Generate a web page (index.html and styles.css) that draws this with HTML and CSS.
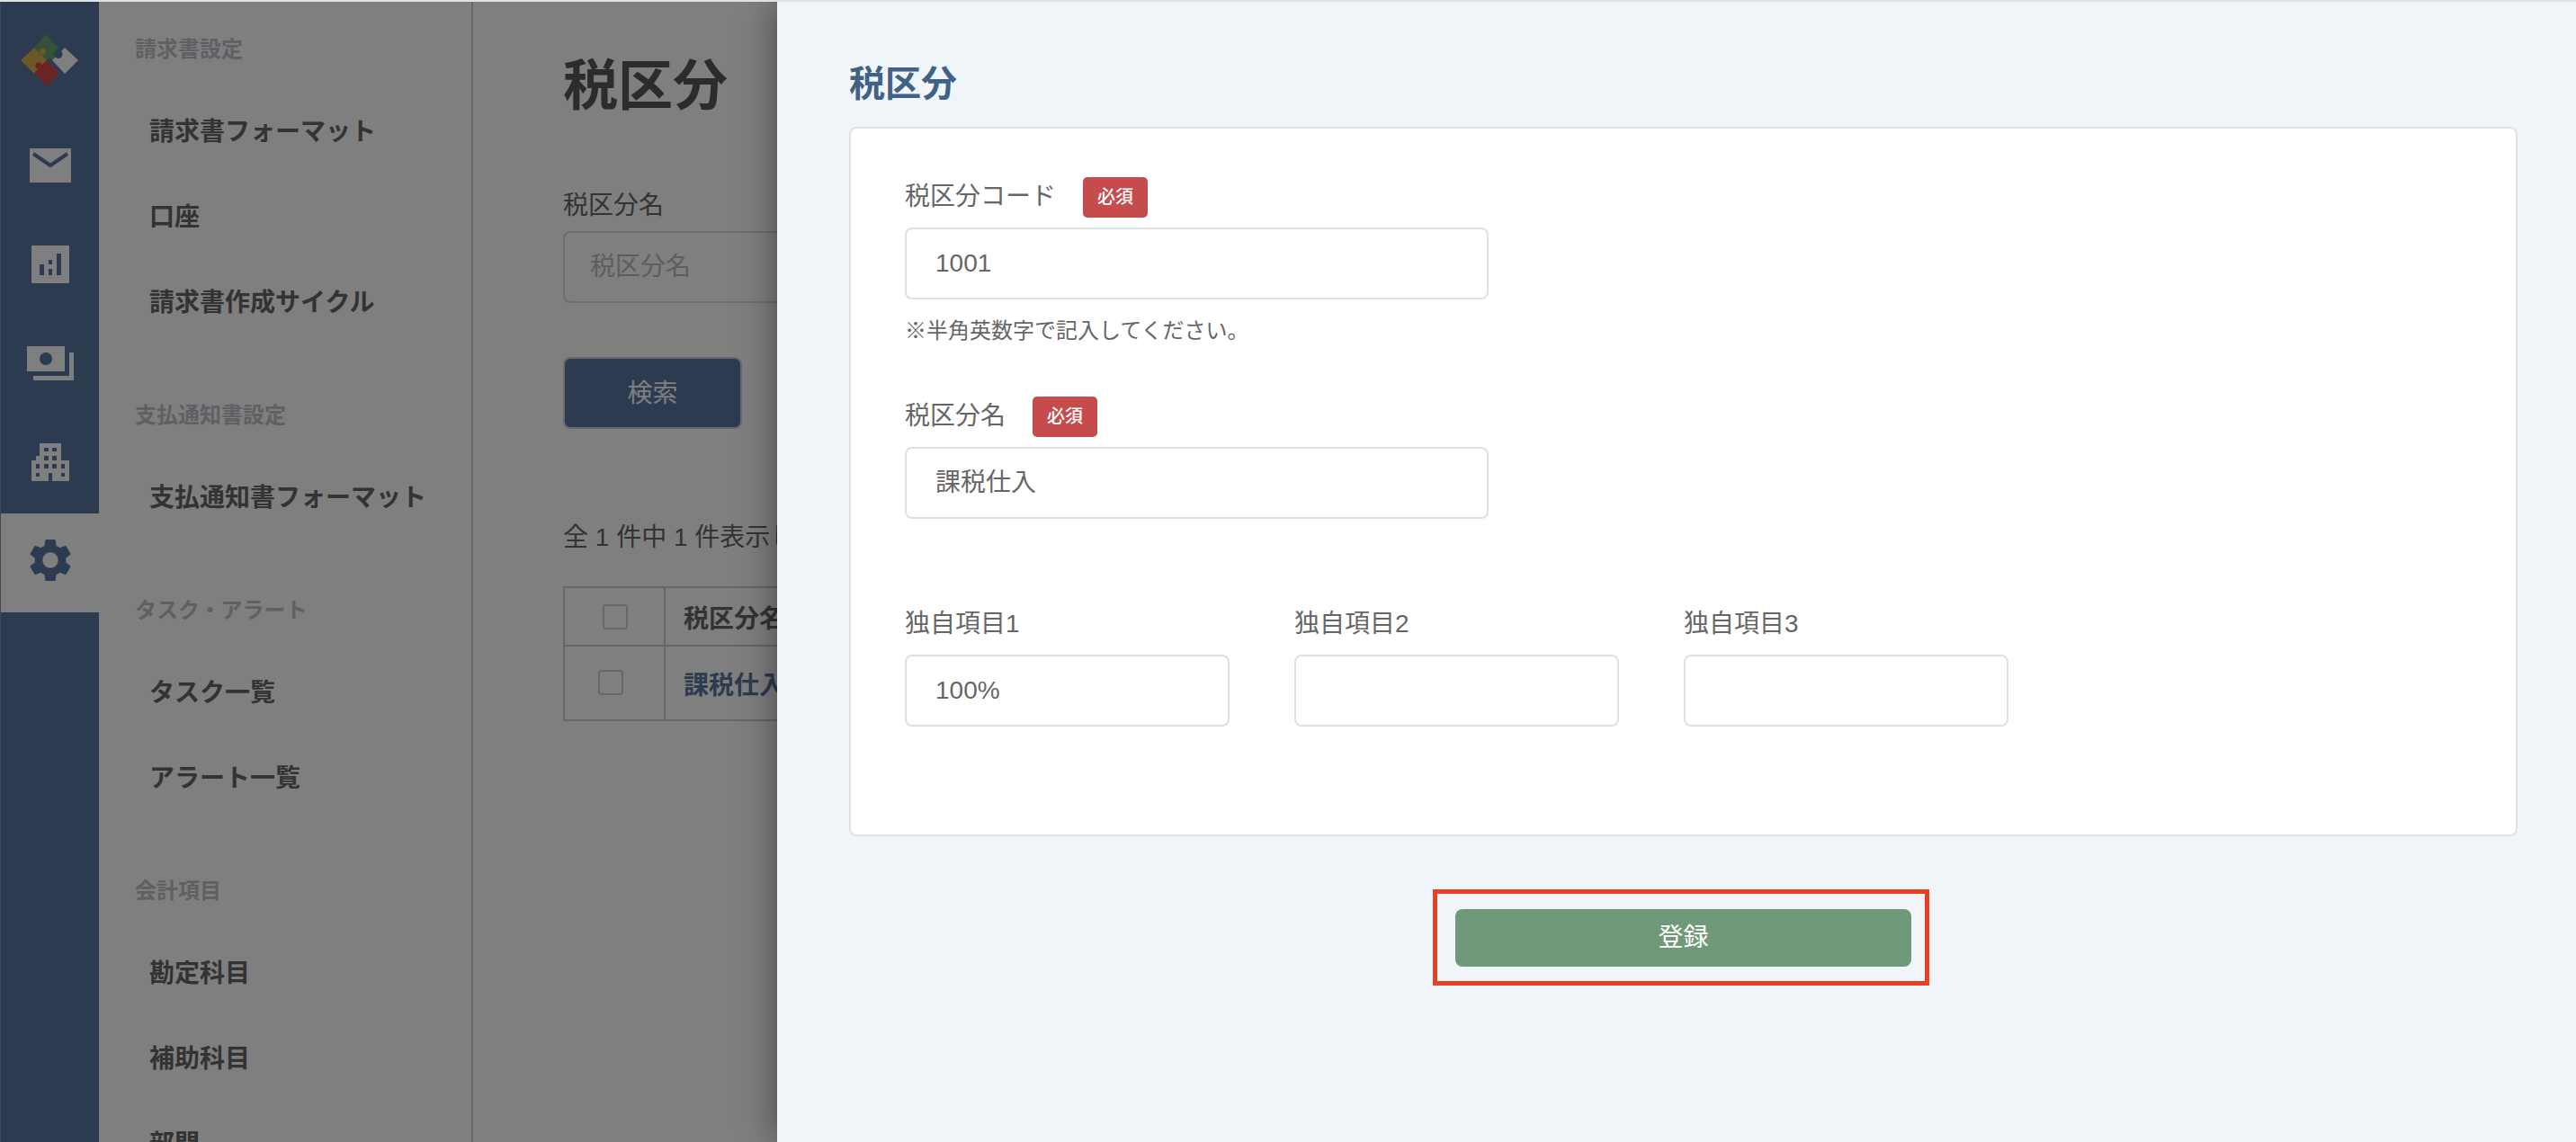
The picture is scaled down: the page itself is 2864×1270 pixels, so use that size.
FILE: index.html
```html
<!DOCTYPE html>
<html lang="ja">
<head>
<meta charset="utf-8">
<title>税区分</title>
<link rel="stylesheet" href="styles.css">
</head>
<body>
<div class="app">
  <nav class="rail">
    <div class="rail-logo">
      <svg class="logo" viewBox="0 0 64 58" aria-hidden="true">
        <path fill="#66a472" d="M27.5 0 42 15 29 29 15 15Z"/>
        <circle fill="#66a472" cx="35" cy="24.5" r="3.5"/>
        <path fill="#d8b04f" d="M15 15 29 29 15 44 0 29Z"/>
        <circle fill="#d8b04f" cx="24.5" cy="19.5" r="3.5"/>
        <path fill="#d64646" d="M29 29 43 43 29 58 15 43Z"/>
        <circle fill="#d64646" cx="20" cy="35" r="3.8"/>
        <path fill="#fff" d="M49 15 64 29 49 44 35 29Z"/>
        <circle fill="#58769e" cx="42" cy="22.5" r="4.5"/>
      </svg>
    </div>
    <a class="rail-item">
      <svg class="icon-mail" viewBox="0 0 46 38" aria-hidden="true"><path fill="#fff" d="M0 0H46V38H0Z"/><path fill="none" stroke="#58769e" stroke-width="4" d="M4 6 23 19 42 6"/></svg>
    </a>
    <a class="rail-item">
      <svg class="icon-chart" viewBox="0 0 42 42" aria-hidden="true"><path fill="#fff" fill-rule="evenodd" d="M0 0H42V42H0ZM9 21V33H14V21ZM19 16V21H23V16ZM19 26V33H23V26ZM28 9V33H33V9Z"/></svg>
    </a>
    <a class="rail-item">
      <svg class="icon-money" viewBox="0 0 52 38" aria-hidden="true"><path fill="#fff" fill-rule="evenodd" d="M0 0H42V28H0ZM21 7A7 7 0 1 0 21 21 7 7 0 1 0 21 7Z"/><path fill="#fff" d="M47 7H52V38H7V33H47Z"/></svg>
    </a>
    <a class="rail-item">
      <svg class="icon-building" viewBox="0 0 42 42" aria-hidden="true"><path fill="#fff" fill-rule="evenodd" d="M9 0H33V19H42V42H23V33H19V42H0V19H9ZM14 5V9H19V5ZM23 5V9H28V5ZM5 14V19H9V14ZM14 14V19H19V14ZM23 14V19H28V14ZM5 23V28H9V23ZM14 23V28H19V23ZM23 23V28H28V23ZM33 23V28H37V23ZM5 33V37H9V33ZM33 33V37H37V33Z"/></svg>
    </a>
    <a class="rail-item rail-item-active">
      <svg class="icon-gear" viewBox="2.6 2 18.8 20" aria-hidden="true"><path fill="#58769e" d="M19.14 12.94c.04-.3.06-.61.06-.94 0-.32-.02-.64-.07-.94l2.03-1.58c.18-.14.23-.41.12-.61l-1.92-3.32c-.12-.22-.37-.29-.59-.22l-2.39.96c-.5-.38-1.03-.7-1.62-.94l-.36-2.54c-.04-.24-.24-.41-.48-.41h-3.84c-.24 0-.43.17-.47.41l-.36 2.54c-.59.24-1.13.57-1.62.94l-2.39-.96c-.22-.08-.47 0-.59.22L2.74 8.87c-.12.21-.08.47.12.61l2.03 1.58c-.05.3-.09.63-.09.94s.02.64.07.94l-2.03 1.58c-.18.14-.23.41-.12.61l1.92 3.32c.12.22.37.29.59.22l2.39-.96c.5.38 1.03.7 1.62.94l.36 2.54c.05.24.24.41.48.41h3.84c.24 0 .44-.17.47-.41l.36-2.54c.59-.24 1.13-.56 1.62-.94l2.39.96c.22.08.47 0 .59-.22l1.92-3.32c.12-.22.07-.47-.12-.61l-2.01-1.58zM12 15.6c-1.98 0-3.6-1.62-3.6-3.6s1.62-3.6 3.6-3.6 3.6 1.62 3.6 3.6-1.62 3.6-3.6 3.6z"/></svg>
    </a>
  </nav>

  <aside class="side">
    <section class="side-group">
      <h2 class="side-head">請求書設定</h2>
      <a class="side-link">請求書フォーマット</a>
      <a class="side-link">口座</a>
      <a class="side-link">請求書作成サイクル</a>
    </section>
    <section class="side-group">
      <h2 class="side-head">支払通知書設定</h2>
      <a class="side-link">支払通知書フォーマット</a>
    </section>
    <section class="side-group">
      <h2 class="side-head">タスク・アラート</h2>
      <a class="side-link">タスク一覧</a>
      <a class="side-link">アラート一覧</a>
    </section>
    <section class="side-group">
      <h2 class="side-head">会計項目</h2>
      <a class="side-link">勘定科目</a>
      <a class="side-link">補助科目</a>
      <a class="side-link">部門</a>
    </section>
  </aside>

  <main class="main">
    <h1 class="main-title">税区分</h1>
    <label class="main-label">税区分名</label>
    <input class="main-input" type="text" placeholder="税区分名">
    <button class="main-search" type="button">検索</button>
    <p class="main-count">全 1 件中 1 件表示しています</p>
    <table class="list">
      <tr class="list-head">
        <th class="list-check"><span class="box box-head"></span></th>
        <th class="list-name">税区分名</th>
      </tr>
      <tr class="list-row">
        <td class="list-check"><span class="box box-row"></span></td>
        <td class="list-name"><a class="list-link">課税仕入</a></td>
      </tr>
    </table>
  </main>
</div>

<div class="overlay"></div>

<div class="panel">
  <h2 class="panel-title">税区分</h2>
  <form class="card">
    <div class="field-head">
      <label class="field-label">税区分コード</label>
      <span class="badge">必須</span>
    </div>
    <input class="input input-wide" type="text" value="1001">
    <p class="note">※半角英数字で記入してください。</p>
    <div class="field-head field-head-second">
      <label class="field-label">税区分名</label>
      <span class="badge">必須</span>
    </div>
    <input class="input input-wide input-cjk" type="text" value="課税仕入">
    <div class="custom-row">
      <div class="custom-field">
        <label class="custom-label">独自項目1</label>
        <input class="input input-small" type="text" value="100%">
      </div>
      <div class="custom-field">
        <label class="custom-label">独自項目2</label>
        <input class="input input-small" type="text">
      </div>
      <div class="custom-field">
        <label class="custom-label">独自項目3</label>
        <input class="input input-small" type="text">
      </div>
    </div>
  </form>
  <div class="actions">
    <button class="submit" type="button">登録<span class="callout"></span></button>
  </div>
</div>
</body>
</html>
```
FILE: styles.css
```css
* { box-sizing: border-box; }

html, body {
  margin: 0;
  height: 1270px;
  overflow: hidden;
}

body {
  position: relative;
  border-top: 2px solid #dfe3e8;
  background: #fff;
  color: #666;
  font-family: "Liberation Sans", "Noto Sans CJK JP", sans-serif;
  font-size: 28px;
}

input, button {
  font: inherit;
  color: inherit;
}

.app {
  display: flex;
  height: 1268px;
  overflow: hidden;
}

/* icon rail */
.rail {
  flex: 0 0 110px;
  background: #58769e;
  border-left: 1px solid #7f93ad;
}

.rail-logo {
  height: 129px;
  padding: 36px 0 0 22px;
}

.logo { display: block; width: 64px; height: 58px; }

.rail-item {
  display: flex;
  align-items: center;
  justify-content: center;
  height: 110px;
  padding-bottom: 4px;
}

.rail-item-active { background: #fff; }

.icon-mail { width: 46px; height: 38px; }
.icon-chart { width: 42px; height: 42px; }
.icon-money { width: 52px; height: 38px; }
.icon-building { width: 42px; height: 42px; }
.icon-gear { width: 46px; height: 48px; margin-top: -2px; }

/* secondary sidebar */
.side {
  flex: 0 0 416px;
  padding-top: 33px;
  border-right: 2px solid #ccc;
}

.side-group { margin-bottom: 58px; }

.side-head {
  margin: 0 0 24px 40px;
  color: #bfc0c8;
  font-size: 24px;
  font-weight: 700;
  line-height: 40px;
}

.side-link {
  display: block;
  margin-left: 56px;
  color: #666;
  font-weight: 700;
  line-height: 95px;
}

/* page below the overlay */
.main {
  flex: 1;
  padding: 64px 0 0 100px;
}

.main-title {
  margin: 0 0 83px;
  color: #585858;
  font-size: 61px;
  font-weight: 700;
  line-height: 60px;
}

.main-label {
  display: block;
  margin-bottom: 8px;
  line-height: 40px;
}

.main-input {
  display: block;
  width: 500px;
  height: 80px;
  padding: 0 28px;
  border: 2px solid #dcdce4;
  border-radius: 8px;
  background: #fff;
}

.main-input::placeholder { color: #bbb; opacity: 1; }

.main-search {
  display: block;
  width: 199px;
  height: 80px;
  margin-top: 60px;
  padding: 0 0 4px;
  border: 2px solid #d0d4da;
  border-radius: 8px;
  background: #58769e;
  color: #fff;
}

.main-count {
  margin: 101px 0 34px;
  line-height: 40px;
}

.list {
  width: 1000px;
  border-collapse: collapse;
}

.list th, .list td {
  padding: 0;
  border: 2px solid #ccc;
  text-align: left;
}

.list-head { height: 65px; }
.list-row { height: 83px; }
.list-check { width: 112px; line-height: 0; }
.list-name { padding-left: 20px !important; font-weight: 700; }
.list-head .list-name { color: #666; }

.list-link {
  color: #58769e;
  font-weight: 700;
}

.box {
  display: inline-block;
  width: 28px;
  height: 28px;
  border: 2px solid #ccd;
  border-radius: 4px;
  background: #fff;
}

.box-head { margin-left: 42px; }
.box-row { margin-left: 37px; margin-top: -2px; }

.overlay {
  position: absolute;
  inset: 0;
  background: rgba(0, 0, 0, .5);
}

/* slide-in panel */
.panel {
  position: absolute;
  top: 0;
  right: 0;
  bottom: 0;
  left: 864px;
  padding: 61px 65px 0 80px;
  background: #f0f5fa;
  box-shadow: 0 0 40px rgba(0, 0, 0, .45);
}

.panel-title {
  margin: 0 0 18px;
  color: #416285;
  font-size: 40px;
  font-weight: 700;
  line-height: 60px;
}

.card {
  padding: 54px 60px 120px;
  border: 2px solid #dfe2e8;
  border-radius: 8px;
  background: #fff;
}

.field-head {
  display: flex;
  align-items: center;
  height: 45px;
  margin-bottom: 11px;
}

.field-head-second { margin-top: 58px; }

.field-label {
  margin-top: -2px;
  line-height: 40px;
}

.badge {
  width: 72px;
  height: 45px;
  margin-left: 30px;
  border-radius: 5px;
  background: #c64b4c;
  color: #fff;
  font-size: 20px;
  font-weight: 500;
  line-height: 45px;
  text-align: center;
}

.input {
  display: block;
  height: 80px;
  padding: 0 32px;
  border: 2px solid #dfe0e6;
  border-radius: 8px;
  background: #fff;
}

.input-wide { width: 649px; }
.input-small { width: 361px; }
.input-cjk { padding-bottom: 6px; }

.note {
  margin: 20px 0 0;
  font-size: 24px;
  line-height: 30px;
}

.custom-row {
  display: flex;
  gap: 72px;
  margin-top: 96px;
}

.custom-label {
  display: block;
  margin-bottom: 14px;
  padding-top: 1px;
  line-height: 40px;
}

.actions {
  display: flex;
  justify-content: center;
  margin-top: 81px;
}

.submit {
  position: relative;
  width: 507px;
  height: 64px;
  padding: 0 0 6px;
  border: 0;
  border-radius: 8px;
  background: #6f9979;
  color: #fff;
}

.callout {
  position: absolute;
  inset: -22px -20px -21px -25px;
  border: 5px solid #ea3f23;
}
```
